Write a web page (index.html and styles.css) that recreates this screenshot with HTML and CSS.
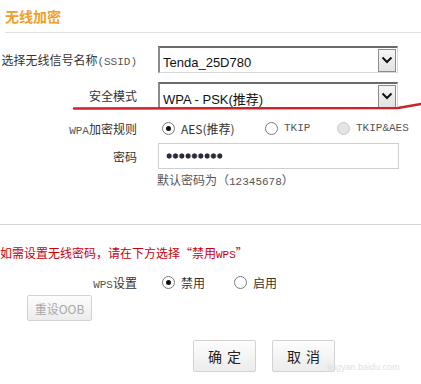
FILE: index.html
```html
<!DOCTYPE html>
<html>
  <head>
    <meta charset="utf-8">
    <title>无线加密</title>
    <link rel="stylesheet" href="styles.css">
  </head>
  <body>
    <div class="page">
      <h2 class="title">无线加密</h2>

      <div class="section">
        <div class="row row-select">
          <label class="lbl">选择无线信号名称<span class="mono">(SSID)</span></label>
          <div class="select">
            <span>Tenda_25D780</span>
            <i class="drop"><svg width="12" height="8" viewBox="0 0 12 8"><path d="M1.5 1.5 L6 6 L10.5 1.5" fill="none" stroke="#111" stroke-width="2"/></svg></i>
          </div>
        </div>

        <div class="row row-select second">
          <label class="lbl">安全模式</label>
          <div class="select">
            <span>WPA - PSK(推荐)</span>
            <i class="drop"><svg width="12" height="8" viewBox="0 0 12 8"><path d="M1.5 1.5 L6 6 L10.5 1.5" fill="none" stroke="#111" stroke-width="2"/></svg></i>
          </div>
        </div>

        <div class="row row-radio">
          <label class="lbl"><span class="mono">WPA</span>加密规则</label>
          <div class="opts opts-wpa">
            <span class="opt"><i class="radio on"></i>AES(推荐)</span>
            <span class="opt"><i class="radio"></i><span class="mono">TKIP</span></span>
            <span class="opt"><i class="radio off"></i><span class="mono">TKIP&amp;AES</span></span>
          </div>
        </div>

        <div class="row row-input">
          <label class="lbl">密码</label>
          <div class="input"><span class="dots"></span></div>
        </div>

        <p class="hint">默认密码为（<span class="mono">12345678</span>）</p>
      </div>

      <svg class="mark" width="421" height="20" viewBox="0 0 421 20">
        <path d="M74 13.5 L398 13 L421 9" fill="none" stroke="#d0202a" stroke-width="2.4" stroke-linecap="round"/>
      </svg>

      <div class="divider"></div>

      <p class="warn">如需设置无线密码，请在下方选择“禁用<span class="mono">WPS</span>”</p>

      <div class="row row-wps">
        <label class="lbl"><span class="mono">WPS</span>设置</label>
        <div class="opts opts-wps">
          <span class="opt"><i class="radio on"></i>禁用</span>
          <span class="opt"><i class="radio"></i>启用</span>
        </div>
      </div>

      <button class="btn btn-reset" disabled>重设OOB</button>

      <div class="actions">
        <button class="btn btn-main">确定</button>
        <button class="btn btn-main">取消</button>
        <span class="watermark">jingyan.baidu.com</span>
      </div>
    </div>
  </body>
</html>
```

FILE: styles.css
```css
* {box-sizing: border-box;}

body {
  margin: 0;
  background: #fff;
  color: #333;
  font-family: "Noto Sans CJK SC", "Liberation Sans", sans-serif;
  font-size: 12px;
}

.page {
  position: relative;
  width: 421px;
  height: 384px;
  overflow: hidden;
}

.title {
  margin: 0 0 0 5px;
  padding: 7px 0 6px 0;
  height: 33px;
  font-size: 14px;
  line-height: 19px;
  font-weight: bold;
  color: #f0a028;
  border-bottom: 1px solid #e2e2e2;
}

.mono {
  font-family: "Liberation Mono", monospace;
  font-size: 11px;
  color: #555;
}

.section {
  margin-top: 13px;
}

.row {
  display: grid;
  grid-template-columns: 137px 1fr;
  column-gap: 21px;
  align-items: center;
}

.lbl {
  text-align: right;
  color: #333;
  white-space: nowrap;
}

.row-select {
  height: 27px;
  margin-bottom: 9px;
}

.row-select.second {
  margin-bottom: 7px;
}

.select {
  width: 240px;
  height: 27px;
  display: flex;
  align-items: center;
  justify-content: space-between;
  padding: 0 1px 0 3px;
  border: 1px solid #d8d8d8;
  border-top: 2px solid #6a6a6a;
  border-left: 2px solid #8a8a8a;
  font-family: "Liberation Sans", "Noto Sans CJK SC", sans-serif;
  font-size: 13px;
  color: #111;
  background: #fff;
}

.select span {
  padding-top: 4px;
}

.drop {
  display: flex;
  align-items: center;
  justify-content: center;
  width: 18px;
  height: 23px;
  border: 1px solid #8c8c8c;
  background: linear-gradient(#f6f6f6, #e2e2e2);
}

.row-radio {
  height: 24px;
  margin-bottom: 3px;
}

.opts {
  display: grid;
  align-items: center;
  padding-left: 4px;
}

.opts-wpa {
  grid-template-columns: 103px 72px auto;
}

.opts-wps {
  grid-template-columns: 72px auto;
}

.opt {
  display: flex;
  align-items: center;
  gap: 6px;
  white-space: nowrap;
}

.radio {
  width: 13px;
  height: 13px;
  border-radius: 50%;
  border: 1px solid #7a7a7a;
  background: #fff;
  position: relative;
}

.radio.on::after {
  content: "";
  position: absolute;
  left: 3px;
  top: 3px;
  width: 5px;
  height: 5px;
  border-radius: 50%;
  background: #111;
}

.radio.off {
  border-color: #c8c8c8;
  background: #e4e4e4;
}

.row-input {
  height: 26px;
}

.input {
  width: 241px;
  height: 26px;
  padding-left: 7px;
  border: 1px solid #cfcfcf;
  display: flex;
  align-items: center;
}

.dots {
  width: 57px;
  height: 6px;
  background: radial-gradient(circle, #2a2a3a 2.3px, transparent 2.9px) 0 0 / 6.33px 6px repeat-x;
}

.hint {
  margin: 3px 0 0 157px;
  line-height: 16px;
  color: #555;
}

.mark {
  position: absolute;
  left: 0;
  top: 95px;
}

.divider {
  margin-top: 34px;
  border-top: 1px solid #d4d4d4;
}

.warn {
  margin: 20px 0 0 0;
  line-height: 16px;
  color: #c8000a;
  white-space: nowrap;
}

.warn .mono {
  color: #c8000a;
}

.row-wps {
  height: 20px;
  margin-top: 9px;
}

.btn {
  font-family: "Noto Sans CJK SC", sans-serif;
  border: 1px solid #d2d2d2;
  background: linear-gradient(#fdfdfd, #ececec);
  border-radius: 2px;
  padding: 0;
}

.btn-reset {
  display: block;
  margin: 3px 0 0 27px;
  width: 65px;
  height: 26px;
  font-size: 12px;
  color: #a8a8a8;
}

.actions {
  position: relative;
  display: flex;
  gap: 16px;
  margin: 19px 0 0 193px;
}

.btn-main {
  width: 63px;
  height: 32px;
  font-size: 14px;
  letter-spacing: 5px;
  text-indent: 5px;
  color: #222;
}

.watermark {
  position: absolute;
  left: 134px;
  top: 22px;
  font-family: "Liberation Sans", sans-serif;
  font-size: 9px;
  color: #e0e0e0;
}
```
